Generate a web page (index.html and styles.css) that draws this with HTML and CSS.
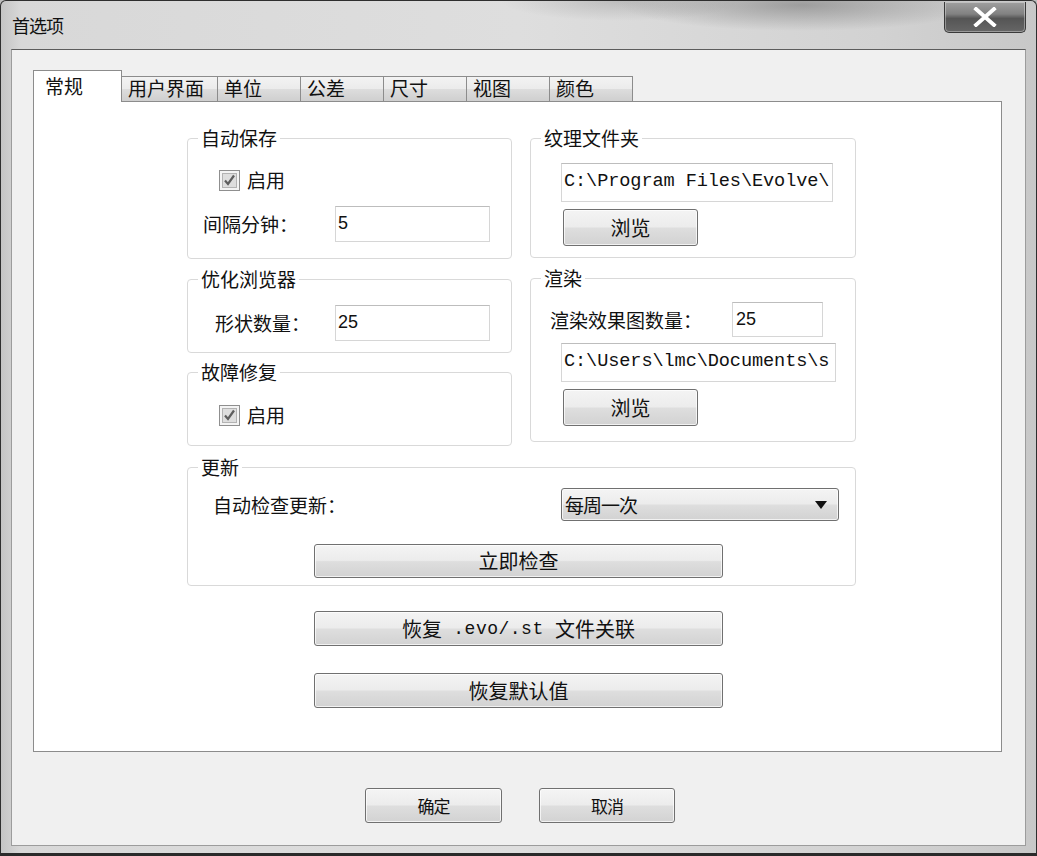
FILE: index.html
```html
<!DOCTYPE html>
<html lang="zh-CN">
<head>
<meta charset="utf-8">
<title>首选项</title>
<link rel="stylesheet" href="styles.css">
</head>
<body>
<div class="window">
  <div class="titlebar">
    <span class="title">首选项</span>
    <div class="close">
      <svg width="24" height="20" viewBox="0 0 24 20"><path d="M3 2 L21 18 M21 2 L3 18" stroke="#fff" stroke-width="3.8" stroke-linecap="square" fill="none"/></svg>
    </div>
  </div>
  <div class="client">
    <div class="tabs">
      <div class="tab active">常规</div>
      <div class="tab wide">用户界面</div>
      <div class="tab">单位</div>
      <div class="tab">公差</div>
      <div class="tab">尺寸</div>
      <div class="tab">视图</div>
      <div class="tab">颜色</div>
    </div>
    <div class="panel">
      <div class="content">
        <div class="columns">
          <div class="col">
            <fieldset class="group g-autosave">
              <legend>自动保存</legend>
              <div class="check-row">
                <span class="checkbox"><svg width="21" height="21" viewBox="0 0 21 21"><rect x="0.5" y="0.5" width="20" height="20" fill="#f4f4f4" stroke="#8f8f8f"/><rect x="3.5" y="3.5" width="14" height="14" fill="#dedede" stroke="#b3b3b3"/><path d="M6 10.5 L9 14 L15 5.5" stroke="#5e5e5e" stroke-width="2.2" fill="none"/></svg></span>
                <span class="label">启用</span>
              </div>
              <div class="field-row interval">
                <span class="label">间隔分钟：</span>
                <span class="input num">5</span>
              </div>
            </fieldset>
            <fieldset class="group g-browser">
              <legend>优化浏览器</legend>
              <div class="field-row shapes">
                <span class="label">形状数量：</span>
                <span class="input num">25</span>
              </div>
            </fieldset>
            <fieldset class="group g-recover">
              <legend>故障修复</legend>
              <div class="check-row">
                <span class="checkbox"><svg width="21" height="21" viewBox="0 0 21 21"><rect x="0.5" y="0.5" width="20" height="20" fill="#f4f4f4" stroke="#8f8f8f"/><rect x="3.5" y="3.5" width="14" height="14" fill="#dedede" stroke="#b3b3b3"/><path d="M6 10.5 L9 14 L15 5.5" stroke="#5e5e5e" stroke-width="2.2" fill="none"/></svg></span>
                <span class="label">启用</span>
              </div>
            </fieldset>
          </div>
          <div class="col">
            <fieldset class="group g-texture">
              <legend>纹理文件夹</legend>
              <div class="input path">C:\Program Files\Evolve\</div>
              <button class="btn browse">浏览</button>
            </fieldset>
            <fieldset class="group g-render">
              <legend>渲染</legend>
              <div class="field-row render-count">
                <span class="label">渲染效果图数量：</span>
                <span class="input mono-num">25</span>
              </div>
              <div class="input path path2">C:\Users\lmc\Documents\s</div>
              <button class="btn browse">浏览</button>
            </fieldset>
          </div>
        </div>
        <fieldset class="group g-update">
          <legend>更新</legend>
          <div class="update-row">
            <span class="label">自动检查更新：</span>
            <div class="select">
              <span>每周一次</span>
              <svg width="12" height="8" viewBox="0 0 12 8"><path d="M0 0 H12 L6 8 Z" fill="#111"/></svg>
            </div>
          </div>
          <button class="btn wide-btn check-now">立即检查</button>
        </fieldset>
        <button class="btn wide-btn restore-assoc">恢复<span class="latin"> .evo/.st </span>文件关联</button>
        <button class="btn wide-btn restore-default">恢复默认值</button>
      </div>
    </div>
    <div class="footer">
      <button class="btn dlg ok">确定</button>
      <button class="btn dlg cancel">取消</button>
    </div>
  </div>
</div>
</body>
</html>
```
FILE: styles.css
```css
* { box-sizing: border-box; }

html, body {
  margin: 0;
  padding: 0;
  background: #bdbdbd;
}

body {
  font-family: "Noto Sans CJK SC", "Noto Sans", sans-serif;
  color: #111;
}

.window {
  width: 1037px;
  height: 856px;
  border: 1px solid #2e2e2e;
  border-bottom: 3px solid #2a2a2a;
  border-radius: 6px 6px 0 0;
  padding: 0 10px 7px 10px;
  background:
    radial-gradient(ellipse 180px 26px at 800px 4px, rgba(90,90,90,0.45), rgba(90,90,90,0) 100%),
    radial-gradient(ellipse 120px 20px at 620px 0px, rgba(120,120,120,0.3), rgba(120,120,120,0) 100%),
    linear-gradient(to right, #c4c4c4 0, #d8d8d8 20px, #dedede 50%, #d2d2d2 85%, #c8c8c8 100%);
  display: flex;
  flex-direction: column;
  overflow: hidden;
}

.titlebar {
  height: 48px;
  display: flex;
  align-items: flex-start;
  flex: none;
}

.title {
  padding-left: 1px;
  margin-top: 12px;
  font-size: 18px;
  line-height: 24px;
  letter-spacing: -1px;
  color: #111;
}

.close {
  margin-left: auto;
  margin-top: 1px;
  width: 82px;
  height: 31px;
  border: 1px solid #3a3a3a;
  border-top: none;
  border-radius: 0 0 5px 5px;
  background: linear-gradient(to bottom, #a0a0a0 0%, #828282 40%, #555555 55%, #666666 100%);
  box-shadow: inset 0 0 0 1px rgba(255,255,255,0.35);
  display: flex;
  align-items: center;
  justify-content: center;
}

.client {
  flex: 1;
  background: #f0f0f0;
  border: 1px solid #9c9c9c;
  border-top-color: #5c5c5c;
  padding: 20px 23px 0 21px;
  display: flex;
  flex-direction: column;
}

.tabs {
  height: 31px;
  display: flex;
  align-items: flex-end;
}

.tab {
  width: 84px;
  height: 25px;
  border: 1px solid #8c8c8c;
  border-bottom: none;
  margin-right: -1px;
  background: linear-gradient(to bottom, #f3f3f3 0%, #ebebeb 50%, #dddddd 51%, #cfcfcf 100%);
  font-size: 19px;
  line-height: 22px;
  padding-left: 6px;
  white-space: nowrap;
}

.tab.wide { width: 97px; }

.tab.active {
  width: 89px;
  height: 32px;
  margin-bottom: -1px;
  background: #fff;
  padding-left: 11px;
  padding-top: 4px;
  position: relative;
  z-index: 1;
}

.panel {
  height: 651px;
  background: #fff;
  border: 1px solid #8c8c8c;
  padding: 26px 0 0 153px;
}

.content {
  width: 669px;
  display: flex;
  flex-direction: column;
  align-items: flex-start;
}

.columns {
  display: flex;
  gap: 18px;
  width: 669px;
}

.col {
  display: flex;
  flex-direction: column;
}

.col:first-child { width: 325px; }
.col:last-child { width: 326px; }

.group {
  margin: 0;
  padding: 0;
  border: 1px solid #d9d9d9;
  border-radius: 4px;
  width: 100%;
  min-width: 0;
}

.group legend {
  margin-left: 10px;
  padding: 0 3px;
  font-size: 19px;
  line-height: 20px;
}

.label {
  font-size: 19px;
  line-height: 22px;
  white-space: nowrap;
}

.check-row {
  display: flex;
  align-items: center;
  gap: 7px;
  height: 22px;
  margin-left: 31px;
}

.checkbox {
  width: 21px;
  height: 21px;
  display: block;
}

.checkbox svg { display: block; }

.field-row {
  display: flex;
  align-items: center;
}

.input {
  background: #fff;
  border: 1px solid #d6d6d6;
  border-top-color: #bdbdbd;
  overflow: hidden;
  white-space: nowrap;
}

.input.num {
  width: 155px;
  height: 36px;
  font-family: "Liberation Sans", sans-serif;
  font-size: 18px;
  line-height: 24px;
  padding: 4px 0 0 2px;
}

.input.mono-num {
  width: 91px;
  height: 35px;
  font-family: "Liberation Sans", sans-serif;
  font-size: 18px;
  line-height: 24px;
  padding: 4px 0 0 3px;
}

.input.path {
  height: 39px;
  width: 272px;
  margin-left: 30px;
  font-family: "Liberation Mono", monospace;
  font-size: 18.6px;
  line-height: 26px;
  padding: 5px 0 0 2px;
  letter-spacing: -0.1px;
}

/* autosave */
.g-autosave { padding-bottom: 16px; }
.g-autosave .check-row { margin-top: 21px; }
.g-autosave .interval { margin-top: 15px; padding-left: 15px; }
.g-autosave .interval .label { width: 132px; }

/* optimize browser */
.g-browser { margin-top: 10px; padding-bottom: 11px; }
.g-browser .shapes { margin-top: 16px; padding-left: 27px; }
.g-browser .shapes .label { width: 120px; }

/* recovery */
.g-recover { margin-top: 9px; padding-bottom: 19px; }
.g-recover .check-row { margin-top: 22px; }

/* texture folder */
.g-texture { padding-bottom: 11px; }
.g-texture .path { margin-top: 15px; }

.btn {
  font-family: "Noto Sans CJK SC", "Noto Sans", sans-serif;
  color: #111;
  border: 1px solid #707070;
  border-radius: 3px;
  background: linear-gradient(to bottom, #f4f4f4 0%, #ececec 48%, #dedede 52%, #d2d2d2 100%);
  box-shadow: inset 0 0 0 1px rgba(255,255,255,0.7);
  padding: 0;
  font-size: 20px;
  line-height: 24px;
  display: flex;
  align-items: center;
  justify-content: center;
  white-space: pre;
}

.btn .latin {
  font-family: "Liberation Mono", monospace;
  font-size: 18px;
  letter-spacing: 0.5px;
}

.btn.browse {
  width: 135px;
  height: 37px;
  margin-top: 7px;
  margin-left: 32px;
}

/* render */
.g-render { margin-top: 10px; padding-bottom: 15px; }
.g-render .render-count { margin-top: 14px; padding-left: 19px; }
.g-render .render-count .label { width: 182px; }
.g-render .path2 { margin-top: 6px; width: 275px; }

/* update */
.g-update { margin-top: 11px; padding-bottom: 7px; }

.update-row {
  margin-top: 11px;
  padding: 0 16px 0 25px;
  display: flex;
  align-items: center;
  justify-content: space-between;
}

.select {
  width: 278px;
  height: 33px;
  border: 1px solid #707070;
  border-radius: 3px;
  background: linear-gradient(to bottom, #f4f4f4 0%, #ececec 48%, #dedede 52%, #d2d2d2 100%);
  box-shadow: inset 0 0 0 1px rgba(255,255,255,0.7);
  display: flex;
  align-items: center;
  justify-content: space-between;
  padding: 0 11px 0 3px;
  font-size: 19px;
  line-height: 22px;
  letter-spacing: -1px;
}

.wide-btn {
  width: 409px;
  height: 34px;
  margin-left: 127px;
}

.check-now { margin-top: 23px; margin-left: 126px; }

.restore-assoc { margin-top: 25px; height: 35px; }
.restore-default { margin-top: 27px; height: 35px; }

.footer {
  margin-top: 36px;
  display: flex;
  justify-content: center;
  gap: 37px;
  padding-left: 5px;
}

.btn.dlg {
  width: 137px;
  height: 35px;
  font-size: 17px;
  letter-spacing: -1px;
}

.btn.cancel { width: 136px; }
```
